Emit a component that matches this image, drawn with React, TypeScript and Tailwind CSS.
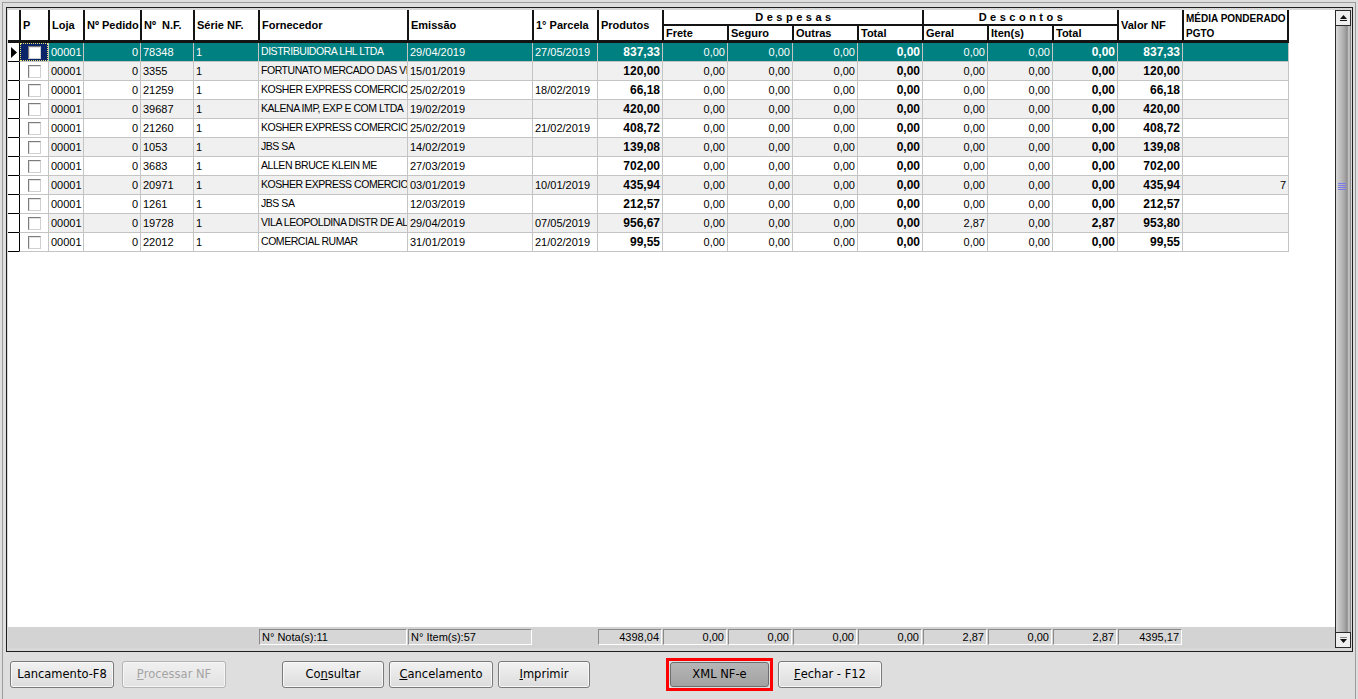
import React from "react";

type Row = {
  nf: string;
  forn: string;
  emis: string;
  parc: string;
  prod: string;
  geral?: string;
  totDesc?: string;
  valor: string;
  media?: string;
};

const rows: Row[] = [
  { nf: "78348", forn: "DISTRIBUIDORA LHL LTDA", emis: "29/04/2019", parc: "27/05/2019", prod: "837,33", valor: "837,33" },
  { nf: "3355", forn: "FORTUNATO MERCADO DAS VILAS", emis: "15/01/2019", parc: "", prod: "120,00", valor: "120,00" },
  { nf: "21259", forn: "KOSHER EXPRESS COMERCIO", emis: "25/02/2019", parc: "18/02/2019", prod: "66,18", valor: "66,18" },
  { nf: "39687", forn: "KALENA IMP, EXP E COM LTDA", emis: "19/02/2019", parc: "", prod: "420,00", valor: "420,00" },
  { nf: "21260", forn: "KOSHER EXPRESS COMERCIO", emis: "25/02/2019", parc: "21/02/2019", prod: "408,72", valor: "408,72" },
  { nf: "1053", forn: "JBS SA", emis: "14/02/2019", parc: "", prod: "139,08", valor: "139,08" },
  { nf: "3683", forn: "ALLEN BRUCE KLEIN ME", emis: "27/03/2019", parc: "", prod: "702,00", valor: "702,00" },
  { nf: "20971", forn: "KOSHER EXPRESS COMERCIO", emis: "03/01/2019", parc: "10/01/2019", prod: "435,94", valor: "435,94", media: "7" },
  { nf: "1261", forn: "JBS SA", emis: "12/03/2019", parc: "", prod: "212,57", valor: "212,57" },
  { nf: "19728", forn: "VILA LEOPOLDINA DISTR DE ALIMENTOS", emis: "29/04/2019", parc: "07/05/2019", prod: "956,67", geral: "2,87", totDesc: "2,87", valor: "953,80" },
  { nf: "22012", forn: "COMERCIAL RUMAR", emis: "31/01/2019", parc: "21/02/2019", prod: "99,55", valor: "99,55" },
];

function Checkbox() {
  return (
    <span className="block h-[13px] w-[13px] border border-t-[#7c7c7c] border-l-[#7c7c7c] border-r-[#d0d0d0] border-b-[#d0d0d0] bg-white shadow-[inset_1px_1px_0_#e4e4e4]" />
  );
}

function HeadCell({ children, className = "" }: { children?: React.ReactNode; className?: string }) {
  return (
    <div className={`flex items-center overflow-hidden whitespace-pre border-l-2 border-[#141414] pl-[2px] ${className}`}>
      {children}
    </div>
  );
}

function Header() {
  return (
    <div className="grid h-[33px] w-[1281px] shrink-0 grid-cols-[11px_29px_35px_57px_53px_65px_149px_125px_65px_65px_65px_65px_65px_65px_65px_65px_65px_65px_107px] grid-rows-[16px_14px] border-b-[3px] border-[#141414] bg-white text-[11px] font-bold text-black">
      <div className="row-span-2" />
      <HeadCell className="row-span-2">P</HeadCell>
      <HeadCell className="row-span-2">Loja</HeadCell>
      <HeadCell className="row-span-2">Nº Pedido</HeadCell>
      <HeadCell className="row-span-2">{"Nº  N.F."}</HeadCell>
      <HeadCell className="row-span-2">Série NF.</HeadCell>
      <HeadCell className="row-span-2">Fornecedor</HeadCell>
      <HeadCell className="row-span-2">Emissão</HeadCell>
      <HeadCell className="row-span-2">1° Parcela</HeadCell>
      <HeadCell className="row-span-2">Produtos</HeadCell>
      <div className="col-span-4 flex items-center justify-center border-b-2 border-l-2 border-[#141414] pl-[4px] tracking-[3.5px]">
        Despesas
      </div>
      <div className="col-span-3 flex items-center justify-center border-b-2 border-l-2 border-[#141414] pl-[4px] tracking-[3.5px]">
        Descontos
      </div>
      <HeadCell className="row-span-2">Valor NF</HeadCell>
      <div className="row-span-2 flex flex-col overflow-hidden whitespace-nowrap border-x-2 border-[#141414] pl-[2px] pt-[1px] text-[10px] leading-[15px]">
        <span>MÉDIA PONDERADO</span>
        <span>PGTO</span>
      </div>
      <HeadCell>Frete</HeadCell>
      <HeadCell>Seguro</HeadCell>
      <HeadCell>Outras</HeadCell>
      <HeadCell>Total</HeadCell>
      <HeadCell>Geral</HeadCell>
      <HeadCell>Iten(s)</HeadCell>
      <HeadCell>Total</HeadCell>
    </div>
  );
}

function DataRow({ r, i }: { r: Row; i: number }) {
  const sel = i === 0;
  const bg = sel ? "bg-[#008080] text-white" : i % 2 ? "bg-[#f0f0f0] text-black" : "bg-white text-black";
  const base = `flex h-full shrink-0 items-center overflow-hidden whitespace-nowrap border-b border-l border-[#c4c4c4] ${bg}`;
  const left = `${base} pl-[2px]`;
  const right = `${base} justify-end pr-[2px]`;
  const bold = `${right} text-[12px] font-bold`;
  return (
    <div className="flex h-[19px] shrink-0 text-[11px]">
      <div className="flex h-full w-[11px] shrink-0 items-center border-b border-black bg-white pl-[3px]">
        {sel && (
          <svg width="6" height="11" viewBox="0 0 6 11">
            <polygon points="0,0 6,5.5 0,11" fill="#000" />
          </svg>
        )}
      </div>
      <div className={`h-full w-[29px] shrink-0 border-b border-l border-b-[#c4c4c4] border-l-black ${sel ? "bg-[#0a246a]" : "bg-white"}`}>
        <div className={`flex h-full w-full items-center pl-[7px] ${sel ? "border border-dotted border-[#e8e870]" : "border border-transparent"}`}>
          <Checkbox />
        </div>
      </div>
      <div className={`${left} w-[35px]`}>00001</div>
      <div className={`${right} w-[57px]`}>0</div>
      <div className={`${left} w-[53px]`}>{r.nf}</div>
      <div className={`${left} w-[65px]`}>1</div>
      <div className={`${left} w-[149px] text-[10.5px] tracking-[-0.45px]`}>{r.forn}</div>
      <div className={`${left} w-[125px]`}>{r.emis}</div>
      <div className={`${left} w-[65px]`}>{r.parc}</div>
      <div className={`${bold} w-[65px]`}>{r.prod}</div>
      <div className={`${right} w-[65px]`}>0,00</div>
      <div className={`${right} w-[65px]`}>0,00</div>
      <div className={`${right} w-[65px]`}>0,00</div>
      <div className={`${bold} w-[65px]`}>0,00</div>
      <div className={`${right} w-[65px]`}>{r.geral ?? "0,00"}</div>
      <div className={`${right} w-[65px]`}>0,00</div>
      <div className={`${bold} w-[65px]`}>{r.totDesc ?? "0,00"}</div>
      <div className={`${bold} w-[65px]`}>{r.valor}</div>
      <div className={`${right} w-[107px] border-r`}>{r.media ?? ""}</div>
    </div>
  );
}

function FootBox({ w, children, right }: { w: string; children?: React.ReactNode; right?: boolean }) {
  return (
    <div className={`${w} shrink-0 pl-[1px]`}>
      <div
        className={`flex h-[16px] items-center border border-t-[#8a8a8a] border-l-[#8a8a8a] border-r-white border-b-white bg-[#d6d6d6] px-[2px] ${right ? "justify-end" : ""}`}
      >
        {children}
      </div>
    </div>
  );
}

function Footer() {
  return (
    <div className="flex h-[21px] shrink-0 bg-[#d3d3d3] pt-[2px] text-[11px] text-black">
      <div className="w-[250px] shrink-0" />
      <FootBox w="w-[149px]">N° Nota(s):11</FootBox>
      <FootBox w="w-[125px]">N° Item(s):57</FootBox>
      <div className="w-[65px] shrink-0" />
      <FootBox w="w-[65px]" right>4398,04</FootBox>
      <FootBox w="w-[65px]" right>0,00</FootBox>
      <FootBox w="w-[65px]" right>0,00</FootBox>
      <FootBox w="w-[65px]" right>0,00</FootBox>
      <FootBox w="w-[65px]" right>0,00</FootBox>
      <FootBox w="w-[65px]" right>2,87</FootBox>
      <FootBox w="w-[65px]" right>0,00</FootBox>
      <FootBox w="w-[65px]" right>2,87</FootBox>
      <FootBox w="w-[65px]" right>4395,17</FootBox>
    </div>
  );
}

function ScrollBar() {
  const cyl =
    "bg-[linear-gradient(to_right,#dadada_0%,#c6c6c6_20%,#a8a8a8_55%,#8e8e8e_75%,#d2d2d2_86%,#7a7a7a_100%)]";
  return (
    <div className="flex h-[638px] w-[16px] shrink-0 flex-col">
      <div className="flex h-[16px] shrink-0 items-center justify-center border border-[#2a2a2a] bg-[#eeeeee]">
        <svg width="9" height="8" viewBox="0 0 9 8">
          <polygon points="4.5,1 8,5 1,5" fill="#111" />
          <rect x="1" y="6" width="7" height="1" fill="#111" />
        </svg>
      </div>
      <div className={`flex h-[320px] shrink-0 items-center justify-center border-l border-[#2a2a2a] ${cyl}`}>
        <div className="flex flex-col gap-[1px] pr-[3px]">
          <div className="h-[1px] w-[8px] bg-[#7a7ae8]" />
          <div className="h-[1px] w-[8px] bg-[#7a7ae8]" />
          <div className="h-[1px] w-[8px] bg-[#7a7ae8]" />
          <div className="h-[1px] w-[8px] bg-[#7a7ae8]" />
        </div>
      </div>
      <div className={`flex-1 border-l border-[#2a2a2a] ${cyl}`} />
      <div className="flex h-[16px] shrink-0 items-center justify-center border border-[#2a2a2a] bg-[#eeeeee]">
        <svg width="9" height="8" viewBox="0 0 9 8">
          <rect x="1" y="1" width="7" height="1" fill="#888" />
          <polygon points="1,3 8,3 4.5,7" fill="#111" />
        </svg>
      </div>
    </div>
  );
}

function Btn({
  w,
  children,
  disabled,
  pressed,
  className = "",
}: {
  w: string;
  children: React.ReactNode;
  disabled?: boolean;
  pressed?: boolean;
  className?: string;
}) {
  const look = pressed
    ? "h-[25px] border-[#6e6e6e] bg-linear-to-b from-[#b6b6b6] to-[#a2a2a2] text-black"
    : disabled
      ? "h-[27px] border-[#b4b4b4] bg-linear-to-b from-[#f0f0f0] to-[#e2e2e2] text-[#a4a4a4] shadow-[inset_0_0_0_1px_#f6f6f6]"
      : "h-[27px] border-[#7a7a7a] bg-linear-to-b from-[#f2f2f2] to-[#dcdcdc] text-black shadow-[inset_0_0_0_1px_#f8f8f8]";
  return (
    <div className={`${w} ${look} ${className} flex shrink-0 items-center justify-center rounded-[3px] border text-[11.5px]`}>
      {children}
    </div>
  );
}

export default function App() {
  return (
    <div className="h-[699px] w-[1358px] overflow-hidden bg-[#dedede] pt-[2px] font-['Liberation_Sans',Arial,sans-serif]">
      <div className="mx-[2px] h-[697px] border-x border-t border-[#9c9c9c] pt-[4px]">
        <div className="ml-[3px] flex h-[645px] w-[1347px] border border-[#1e1e1e] bg-[#d8d8d8] pb-[3px] pl-[1px] pr-[1px] pt-[2px]">
          <div className="flex h-[638px] w-[1327px] shrink-0 flex-col bg-white">
            <div className="flex shrink-0">
              <Header />
            </div>
            {rows.map((r, i) => (
              <DataRow key={i} r={r} i={i} />
            ))}
            <div className="flex-1 bg-white" />
            <Footer />
          </div>
          <ScrollBar />
        </div>

        <div className="mt-[6px] flex h-[33px] items-center font-['DejaVu_Sans',sans-serif]">
          <Btn w="w-[104px]" className="ml-[7px]">Lancamento-F8</Btn>
          <Btn w="w-[104px]" className="ml-[8px]" disabled>
            <span className="underline">P</span>rocessar NF
          </Btn>
          <Btn w="w-[102px]" className="ml-[56px]">
            Co<span className="underline">n</span>sultar
          </Btn>
          <Btn w="w-[104px]" className="ml-[5px]">
            <span className="underline">C</span>ancelamento
          </Btn>
          <Btn w="w-[92px]" className="ml-[5px]">
            <span className="underline">I</span>mprimir
          </Btn>
          <div className="ml-[76px] flex h-[33px] w-[107px] shrink-0 items-center border-[3px] border-[#ff0000] p-[1px]">
            <Btn w="w-[99px]" pressed>XML NF-e</Btn>
          </div>
          <Btn w="w-[104px]" className="ml-[5px]">
            <span className="underline">F</span>echar - F12
          </Btn>
        </div>
      </div>
    </div>
  );
}
